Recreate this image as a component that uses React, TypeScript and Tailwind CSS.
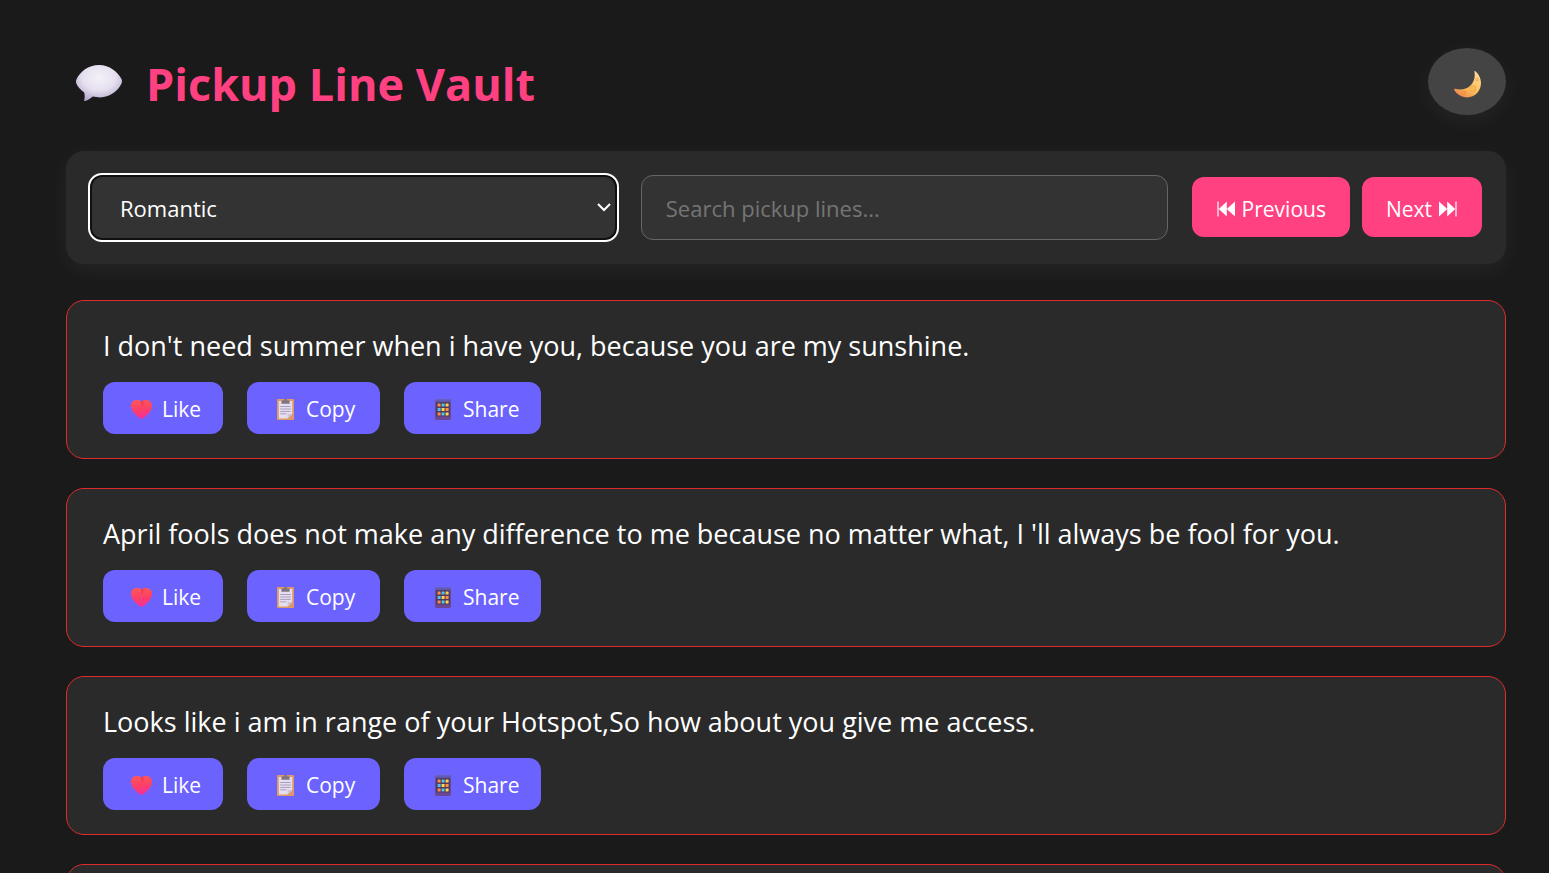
import { useState } from "react";

const lines = [
  "I don't need summer when i have you, because you are my sunshine.",
  "April fools does not make any difference to me because no matter what, I 'll always be fool for you.",
  "Looks like i am in range of your Hotspot,So how about you give me access.",
];

function BubbleIcon() {
  return (
    <svg viewBox="0 0 46 36" className="mb-0.5 h-9 w-[46px]" aria-hidden="true">
      <defs>
        <radialGradient id="bubble" cx="0.5" cy="0.35" r="0.65">
          <stop offset="0" stopColor="#f4f1f7" />
          <stop offset="0.55" stopColor="#e6e0ef" />
          <stop offset="1" stopColor="#b5a9ce" />
        </radialGradient>
      </defs>
      <path
        d="M23 0C33.5 0 42 7 45.6 14.2C46.1 15.6 46.1 17.2 45.5 18.6C42 26.5 33.5 32.4 24 32.4C21.5 32.4 19 32.1 16.7 31.6C14.4 33.6 11.7 35.2 9.4 36C8.5 36.2 8.1 35.6 8.3 34.8C8.8 32.4 8.8 29.8 8.2 27.4C4.8 25.1 2 22.1 0.4 18.8C-0.1 17.4-0.1 15.8 0.4 14.4C4 6.8 12.3 0 23 0Z"
        fill="url(#bubble)"
      />
    </svg>
  );
}

function MoonIcon() {
  return (
    <svg viewBox="0 0 27 27" className="mt-1.5 size-[27px]" aria-hidden="true">
      <defs>
        <linearGradient id="moon" x1="0.9" y1="0.1" x2="0.3" y2="1">
          <stop offset="0" stopColor="#ffd89a" />
          <stop offset="0.55" stopColor="#ffc35c" />
          <stop offset="1" stopColor="#f08a4b" />
        </linearGradient>
      </defs>
      <path
        d="M20.4 0.6C20.6 0 21.2 0 21.6 0.4C25 3.2 27 7.4 27 12C27 20 20.8 26.4 13.2 26.4C7.6 26.4 2.8 23.4 0.2 18.8C-0.1 18.1 0.3 17.5 1 17.7C6.2 19.1 12.3 18.5 16.2 14.7C20.2 10.9 21.4 5.6 20.4 0.6Z"
        fill="url(#moon)"
      />
      <circle cx="19" cy="17.6" r="3" fill="#fbb955" stroke="#e9a04a" strokeWidth="0.6" />
      <circle cx="23" cy="8.6" r="1.6" fill="#fbbd62" stroke="#e9a555" strokeWidth="0.5" />
      <ellipse cx="9.8" cy="21.6" rx="2" ry="1.5" fill="#f3a24a" stroke="#d98238" strokeWidth="0.5" />
    </svg>
  );
}

function HeartIcon() {
  return (
    <svg viewBox="0 0 21 19" className="h-[19px] w-[21px]" aria-hidden="true">
      <defs>
        <linearGradient id="heart" x1="0.4" y1="0" x2="0.5" y2="1">
          <stop offset="0" stopColor="#ff565a" />
          <stop offset="0.5" stopColor="#fb4068" />
          <stop offset="1" stopColor="#f52f9c" />
        </linearGradient>
        <linearGradient id="heartFold" x1="0" y1="0" x2="1" y2="0">
          <stop offset="0" stopColor="#dc2c4a" stopOpacity="0.8" />
          <stop offset="1" stopColor="#ff4a55" stopOpacity="0" />
        </linearGradient>
      </defs>
      <path
        d="M10.5 1.6C9.2 0.4 7.4 0 5.8 0C2.4 0 0 2.4 0 5.8C0 11.4 5 16 9.6 18.7C10.2 19 10.8 19 11.4 18.7C16 16 21 11.4 21 5.8C21 2.4 18.6 0 15.2 0C13.6 0 11.8 0.4 10.5 1.6Z"
        fill="url(#heart)"
      />
      <path d="M10.5 1.6C11.8 0.4 13.4 0 15 0.2C14 2 12.6 4.4 11 6.4C10.4 5 10.2 3.2 10.5 1.6Z" fill="url(#heartFold)" />
    </svg>
  );
}

function ClipboardIcon() {
  return (
    <svg viewBox="0 0 17 21" className="h-[21px] w-[17px]" aria-hidden="true">
      <rect width="17" height="21" rx="1" fill="#dd9a66" />
      <path d="M1.8 2H15.2V15L10.6 19.4H1.8Z" fill="#e6deef" />
      <path d="M10.6 15H15.2L10.6 19.6Z" fill="#cdbfe0" />
      <path d="M4.4 1.4H6.5Q6.8 0 8.5 0T10.5 1.4H12.6V4.8H4.4Z" fill="#80747f" />
      <path d="M3.2 7.5H13.8M3.2 10H13.8M3.2 12.4H13.8M3.2 14.8H9.4" stroke="#a496b8" strokeWidth="0.9" />
    </svg>
  );
}

const keyColors = ["#ff8a4c", "#48c4f5", "#ffcf47", "#48c4f5", "#ffd84f", "#ff8a4c", "#ff8a4c", "#48c4f5", "#ffd84f"];

function PhoneIcon() {
  return (
    <svg viewBox="0 0 16 21" className="h-[21px] w-4" aria-hidden="true">
      <defs>
        <linearGradient id="phone" x1="0" y1="0" x2="0" y2="1">
          <stop offset="0" stopColor="#6a62c4" />
          <stop offset="0.2" stopColor="#5b4e94" />
          <stop offset="1" stopColor="#6c4693" />
        </linearGradient>
      </defs>
      <rect width="16" height="21" rx="1.4" fill="url(#phone)" />
      <rect x="1.2" y="3.2" width="13.6" height="14.2" fill="#533a5c" />
      {keyColors.map((color, i) => (
        <rect
          key={i}
          x={2.6 + (i % 3) * 4}
          y={4.6 + Math.floor(i / 3) * 4.4}
          width="3"
          height="3"
          rx="0.4"
          fill={color}
        />
      ))}
    </svg>
  );
}

function SkipIcon({ next = false }: { next?: boolean }) {
  return (
    <svg viewBox="-1 0 20 16" className="h-4 w-5 fill-white" aria-hidden="true">
      {next ? (
        <path d="M0 0.6L8.2 8L0 15.4ZM8.2 0.6L16.2 8L8.2 15.4ZM16.4 0.4H17.6V15.6H16.4Z" />
      ) : (
        <path d="M18 0.6L9.8 8L18 15.4ZM9.8 0.6L1.8 8L9.8 15.4ZM0.4 0.4H1.6V15.6H0.4Z" />
      )}
    </svg>
  );
}

const actions = [
  { label: "Like", Icon: HeartIcon, width: "w-[120px]" },
  { label: "Copy", Icon: ClipboardIcon, width: "w-[133px]" },
  { label: "Share", Icon: PhoneIcon, width: "w-[137px]" },
];

function LineCard({ text }: { text: string }) {
  return (
    <article className="rounded-[18px] border border-[#e02b2b] bg-[#2a2a2a] px-9 py-6">
      <p className="text-[27px] leading-[42px]">{text}</p>
      <div className="mt-[15px] flex gap-6">
        {actions.map(({ label, Icon, width }) => (
          <button
            key={label}
            type="button"
            className={`flex h-[52px] items-center gap-1.5 rounded-xl bg-[#6c63ff] pt-0.5 pl-6 text-[21px] leading-8 ${width}`}
          >
            <span className="flex w-[29px] justify-center">
              <Icon />
            </span>
            {label}
          </button>
        ))}
      </div>
    </article>
  );
}

export default function App() {
  const [category, setCategory] = useState("Romantic");
  const [query, setQuery] = useState("");

  return (
    <div className="h-screen overflow-hidden bg-[#1a1a1a] pt-12 pr-[43px] pl-[66px] font-['Open_Sans','Noto_Sans',sans-serif] text-white">
      <header className="flex items-start justify-between">
        <h1 className="flex items-center gap-6 pl-2.5 text-[45px] leading-[71px] font-bold text-[#ff4081]">
          <BubbleIcon />
          Pickup Line Vault
        </h1>
        <button
          type="button"
          aria-label="Toggle theme"
          className="flex h-[67px] w-[78px] items-center justify-center rounded-[50%] bg-[#444] shadow-[0_6px_24px_rgba(255,255,255,0.05)]"
        >
          <MoonIcon />
        </button>
      </header>

      <section className="mt-8 flex items-start gap-6 rounded-[18px] bg-[#2a2a2a] p-6 shadow-[0_6px_24px_rgba(255,255,255,0.05)]">
        <div className="relative min-w-0 flex-1">
          <select
            aria-label="Category"
            value={category}
            onChange={(e) => setCategory(e.target.value)}
            className="block h-[65px] w-full appearance-none rounded-xl border-2 border-[#101010] bg-[#333] px-7 pt-0.5 text-[22px] outline-2 outline-white"
          >
            <option>Romantic</option>
            <option>Funny</option>
            <option>Cheesy</option>
          </select>
          <svg
            viewBox="0 0 14 9"
            className="pointer-events-none absolute top-7 right-[6px] h-[9px] w-3.5 fill-none stroke-white stroke-2"
            aria-hidden="true"
          >
            <path d="M1 1L7 7L13 1" />
          </svg>
        </div>
        <div className="min-w-0 flex-1">
          <input
            type="text"
            aria-label="Search pickup lines"
            placeholder="Search pickup lines..."
            value={query}
            onChange={(e) => setQuery(e.target.value)}
            className="block h-[65px] w-full rounded-xl border border-[#666] bg-[#333] px-6 text-[22px] placeholder:text-[#757575]"
          />
        </div>
        <div className="mt-0.5 flex gap-3 text-[21px] leading-8">
          <button type="button" className="flex h-[60px] items-center gap-1.5 rounded-xl bg-[#ff4081] px-6 pt-1">
            <SkipIcon />
            Previous
          </button>
          <button type="button" className="flex h-[60px] items-center gap-1.5 rounded-xl bg-[#ff4081] px-6 pt-1">
            Next
            <SkipIcon next />
          </button>
        </div>
      </section>

      <main className="mt-9 flex flex-col gap-[29px]">
        {lines.map((line) => (
          <LineCard key={line} text={line} />
        ))}
        <div className="h-40 rounded-[18px] border border-[#e02b2b] bg-[#2a2a2a]" />
      </main>
    </div>
  );
}
